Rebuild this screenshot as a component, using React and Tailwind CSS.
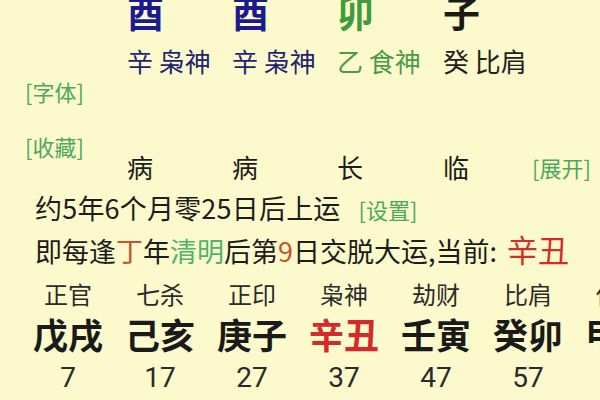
const pillars = [
  { top: "酉", sub: "辛 枭神", life: "病", color: "text-[#1b1b8f]", subColor: "text-[#1e2470]" },
  { top: "酉", sub: "辛 枭神", life: "病", color: "text-[#1b1b8f]", subColor: "text-[#1e2470]" },
  { top: "卯", sub: "乙 食神", life: "长", color: "text-[#3f9b3c]", subColor: "text-[#4a9a48]" },
  { top: "子", sub: "癸 比肩", life: "临", color: "text-[#1a1a1a]", subColor: "text-[#222]" },
];

const luck = [
  { god: "正官", gz: "戊戌", age: 7 },
  { god: "七杀", gz: "己亥", age: 17 },
  { god: "正印", gz: "庚子", age: 27 },
  { god: "枭神", gz: "辛丑", age: 37, current: true },
  { god: "劫财", gz: "壬寅", age: 47 },
  { god: "比肩", gz: "癸卯", age: 57 },
  { god: "伤官", gz: "甲辰", age: 67 },
];

const link = "text-[#4ca85c]";

const App = () => (
  <div className="w-[600px] h-[400px] overflow-hidden bg-[#fcfacc] text-[#1c1c1c] font-['Noto_Sans_CJK_SC',sans-serif]">
    {/* pillars + side links */}
    <div className="flex">
      <div className="w-[127px] shrink-0 pl-[25px] flex flex-col">
        <span className={`mt-[76px] text-[22px] leading-[30px] ${link}`}>[字体]</span>
        <span className={`mt-[25px] text-[22px] leading-[30px] ${link}`}>[收藏]</span>
      </div>
      <div className="flex-1">
        <div className="grid grid-cols-[105px_105px_106px_89px_1fr] -mt-[9px] h-[42px]">
          {pillars.map((p, i) => (
            <span key={i} className={`text-[37px] leading-[42px] font-bold ${p.color}`}>
              {p.top}
            </span>
          ))}
        </div>
        <div className="grid grid-cols-[105px_105px_106px_89px_1fr] mt-[13px]">
          {pillars.map((p, i) => (
            <span key={i} className={`text-[26px] leading-[30px] whitespace-nowrap ${p.subColor}`}>
              {p.sub}
            </span>
          ))}
        </div>
        <div className="grid grid-cols-[105px_105px_106px_89px_1fr] mt-[76px] items-center">
          {pillars.map((p, i) => (
            <span key={i} className="text-[26px] leading-[30px]">
              {p.life}
            </span>
          ))}
          <span className={`text-[22px] leading-[30px] ${link}`}>[展开]</span>
        </div>
      </div>
    </div>

    {/* luck start */}
    <div className="pl-[35px] mt-[9px] flex items-baseline gap-[18px]">
      <span className="text-[27px] leading-[34px] tracking-[0.2px]">约5年6个月零25日后上运</span>
      <span className={`text-[22px] ${link}`}>[设置]</span>
    </div>
    <div className="pl-[35px] mt-[4px] flex items-baseline whitespace-nowrap">
      <span className="text-[27px] leading-[38px]">
        即每逢<span className="text-[#c9532c]">丁</span>年<span className="text-[#4cb46c]">清明</span>后第
        <span className="text-[#c9532c]">9</span>日交脱大运,当前:
      </span>
      <span className="ml-[10px] text-[31px] leading-[38px] text-[#d42d2a]">辛丑</span>
    </div>

    {/* decades */}
    <div className="flex pl-[22px] mt-[7px] whitespace-nowrap">
      {luck.map((l) => (
        <div key={l.age} className="w-[92px] shrink-0 flex flex-col items-center">
          <span className="text-[24px] leading-[34px] text-[#2a2a2a]">{l.god}</span>
          <span
            className={`text-[35px] leading-[44px] font-bold mt-[1px] ${l.current ? "text-[#d42a2a]" : "text-[#1a1a1a]"}`}
          >
            {l.gz}
          </span>
          <span className="text-[28px] leading-[34px] mt-[5px] text-[#2a2a2a] font-['Roboto',sans-serif]">{l.age}</span>
        </div>
      ))}
    </div>
  </div>
);

export default App;
